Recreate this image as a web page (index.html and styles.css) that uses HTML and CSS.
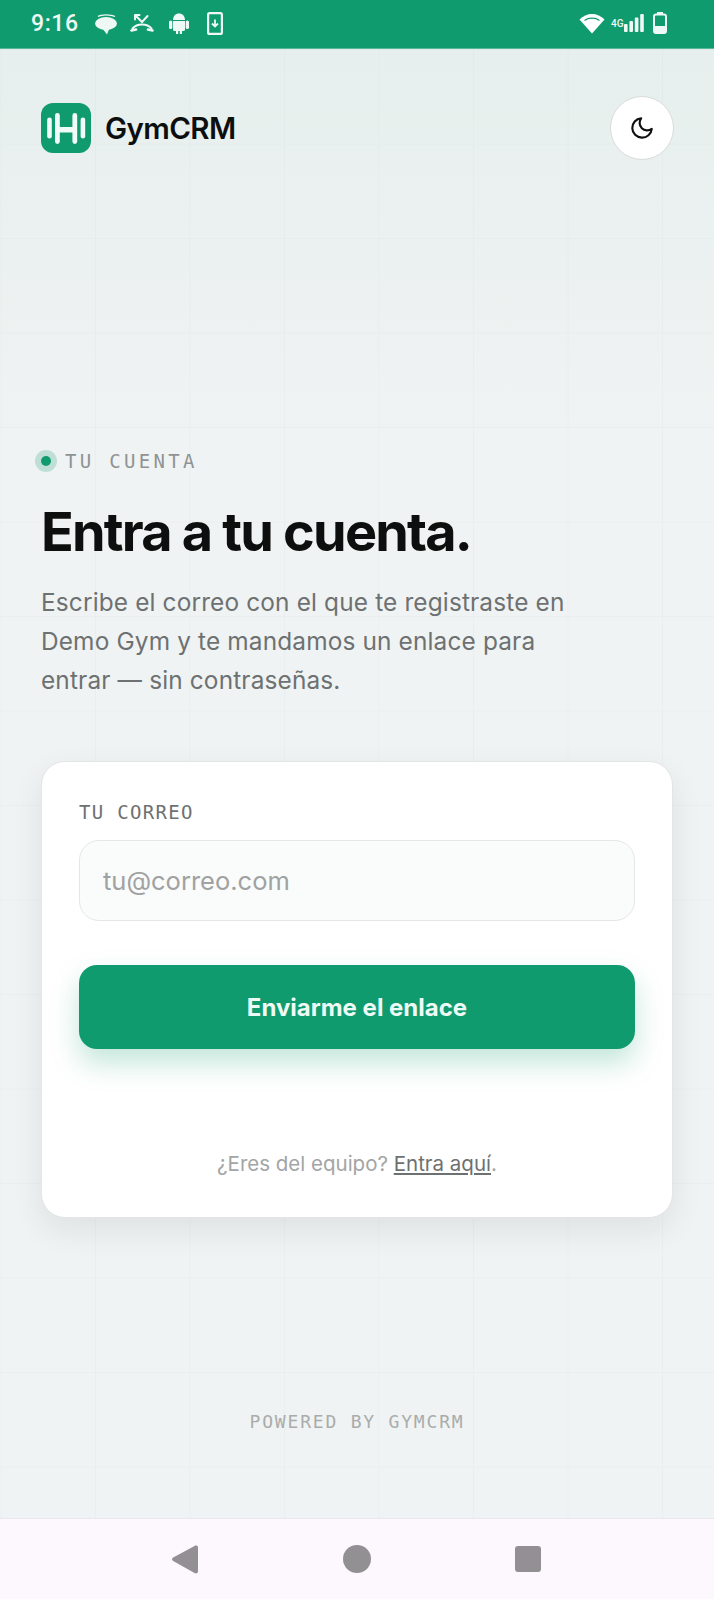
FILE: index.html
```html
<!DOCTYPE html>
<html lang="es">
<head>
    <meta charset="utf-8">
    <title>GymCRM</title>
    <link rel="stylesheet" href="styles.css">
</head>
<body>
    <header class="status-bar">
        <span class="status-time">9:16</span>
        <svg class="status-icon icon-chat" width="22" height="21" viewBox="0 0 22 21" fill="#eef8f4">
            <path d="M3 2.500C6 .2 16 .2 20 2.500" fill="none" stroke="#eef8f4" stroke-width="1.300"/>
            <ellipse cx="11" cy="9.500" rx="11" ry="6.500"/>
            <path d="M7 14l5 6.500 2.500-6.500z"/>
        </svg>
        <svg class="status-icon icon-call" width="24" height="20" viewBox="0 0 24 20" fill="none" stroke="#eef8f4" stroke-width="2" stroke-linecap="round">
            <path d="M2.500 15.500C5 12.500 8.500 11.500 12 11.500s7 1 9.500 4"/>
            <path d="M1.500 17.500l4.500-1M22.500 17.500l-4.500-1" stroke-width="2.600"/>
            <path d="M5 2l7 7 5.500-6M5 2v4.500M5 2h4.500"/>
        </svg>
        <svg class="status-icon icon-android" width="20" height="22" viewBox="0 0 20 22" fill="#eef8f4">
            <path d="M4 8c0-3.800 2.500-6.500 6-6.500s6 2.700 6 6.500z"/>
            <path d="M4 9h12v8.500a1.500 1.500 0 0 1-1.500 1.500H13v3h-2.200v-3H9.200v3H7v-3H5.500A1.500 1.500 0 0 1 4 17.500z"/>
            <rect x="0" y="8.500" width="3.300" height="8.500" rx="1.600"/>
            <rect x="16.700" y="8.500" width="3.300" height="8.500" rx="1.600"/>
        </svg>
        <svg class="status-icon icon-phone" width="16" height="23" viewBox="0 0 16 23" fill="none" stroke="#eef8f4">
            <rect x="1.100" y="1.100" width="13.800" height="20.800" rx="1.500" stroke-width="2.200"/>
            <path d="M8 7.500v7M5 11.500l3 3 3-3" stroke-width="1.800"/>
        </svg>
        <span class="status-spacer"></span>
        <svg class="status-wifi" width="26" height="21" viewBox="0 0 26 21" fill="#fff">
            <path d="M13 20.500L.5 6.500C4 3 8.300 1 13 1s9 2 12.500 5.500z"/>
            <path d="M5.500 7.500C7.500 6 10 5.200 13 5.200s5.500.8 7.500 2.300" stroke="#109b6e" stroke-width="1.200" fill="none"/>
        </svg>
        <span class="status-net">4G</span>
        <svg class="status-bars" width="20" height="18" viewBox="0 0 20 18" fill="#eef8f4">
            <rect x="0" y="10" width="3.600" height="8" rx="1"/>
            <rect x="5.400" y="7" width="3.600" height="11" rx="1"/>
            <rect x="10.800" y="3.500" width="3.600" height="14.500" rx="1"/>
            <rect x="16.200" y="0" width="3.600" height="18" rx="1"/>
        </svg>
        <svg class="status-battery" width="14" height="22" viewBox="0 0 14 22" fill="none">
            <rect x="4" y="0" width="6" height="3" fill="#eef8f4"/>
            <rect x="1" y="2.500" width="12" height="18.500" rx="2" stroke="#eef8f4" stroke-width="2"/>
            <rect x="1" y="14" width="12" height="7" rx="1.500" fill="#eef8f4"/>
        </svg>
    </header>

    <main class="page">
        <div class="top-row">
            <div class="brand">
                <span class="brand-logo">
                    <svg width="50" height="50" viewBox="0 0 50 50" fill="#f1fbf7">
                        <rect x="6.200" y="14.500" width="4.600" height="21" rx="2.300"/>
                        <rect x="14" y="10" width="4.800" height="31" rx="2.400"/>
                        <rect x="31.400" y="10" width="4.800" height="31" rx="2.400"/>
                        <rect x="39.600" y="14.500" width="4.600" height="21" rx="2.300"/>
                        <rect x="17" y="24" width="16" height="5.500"/>
                    </svg>
                </span>
                <span class="brand-name">GymCRM</span>
            </div>
            <button class="theme-toggle" aria-label="Tema">
                <svg width="26" height="26" viewBox="0 0 24 24" fill="none" stroke="#111" stroke-width="2" stroke-linecap="round" stroke-linejoin="round">
                    <path d="M21 12.800A9 9 0 1 1 11.200 3a7 7 0 0 0 9.800 9.800z"/>
                </svg>
            </button>
        </div>

        <section class="intro">
            <div class="eyebrow"><span class="eyebrow-dot"></span>TU CUENTA</div>
            <h1>Entra a tu cuenta.</h1>
            <p class="lead">Escribe el correo con el que te registraste en Demo Gym y te mandamos un enlace para entrar — sin contraseñas.</p>
        </section>

        <section class="card">
            <label class="field-label" for="email">TU CORREO</label>
            <input class="field-input" type="email" id="email" placeholder="tu@correo.com">
            <button class="submit">Enviarme el enlace</button>
            <p class="staff-note">¿Eres del equipo? <a href="#">Entra aquí</a>.</p>
        </section>

        <footer class="powered">POWERED BY GYMCRM</footer>
    </main>

    <nav class="nav-bar">
        <svg width="26" height="29" viewBox="0 0 26 29" fill="#939094">
            <path d="M22.500 1c1.400-.9 3.500-.3 3.500 1.500v24c0 1.800-2.100 2.400-3.500 1.500L1.200 16c-1.600-.9-1.600-2.500 0-3.500z"/>
        </svg>
        <svg width="28" height="28" viewBox="0 0 28 28" fill="#939094">
            <circle cx="14" cy="14" r="14"/>
        </svg>
        <svg class="nav-recent" width="26" height="26" viewBox="0 0 26 26" fill="#939094">
            <rect width="26" height="26" rx="3"/>
        </svg>
    </nav>
</body>
</html>
```

FILE: styles.css
```css
* {
    box-sizing: border-box;
}

html, body {
    margin: 0;
    height: 100%;
}

body {
    display: flex;
    flex-direction: column;
    height: 1599px;
    overflow: hidden;
    font-family: "Inter", "Noto Sans", sans-serif;
    color: #0d0f0e;
    background: #f0f3f3;
}

/* status bar */
.status-bar {
    display: flex;
    align-items: center;
    flex: none;
    height: 49px;
    padding: 0 47px 2px 31px;
    background: #109b6e;
    border-bottom: 1px solid #55b897;
    color: #eef8f4;
}
.status-time {
    width: 64px;
    font-family: "Roboto", sans-serif;
    font-size: 23px;
    font-weight: 500;
    letter-spacing: .6px;
}
.icon-chat {
    margin: 2px 13px 0 0;
}
.icon-call {
    margin: 0 15px 0 0;
}
.icon-android {
    margin: 0 18px 0 0;
}
.status-spacer {
    flex: 1;
}
.status-wifi {
    margin-right: 6px;
}
.status-net {
    font-family: "Roboto", sans-serif;
    font-size: 10px;
    font-weight: 500;
    width: 13px;
}
.status-bars {
    margin-right: 9px;
}

/* page */
.page {
    flex: 1;
    display: flex;
    flex-direction: column;
    padding: 48px 41px 0;
    min-height: 0;
    background-color: #f0f3f3;
    background-image:
        linear-gradient(rgba(16, 155, 110, .045), rgba(16, 155, 110, 0) 400px),
        linear-gradient(#ebeeee 1px, transparent 1px),
        linear-gradient(90deg, #ebeeee 1px, transparent 1px);
    background-size: 100% 100%, 94.500px 94.500px, 94.500px 94.500px;
    background-position: 0 0, 0 0, .500px 0;
}

.top-row {
    display: flex;
    align-items: center;
    justify-content: space-between;
    height: 62px;
}
.brand {
    display: flex;
    align-items: center;
    gap: 14px;
}
.brand-logo {
    display: block;
    width: 50px;
    height: 50px;
    border-radius: 12px;
    background: #109b6e;
}
.brand-logo svg {
    display: block;
}
.brand-name {
    font-size: 29.500px;
    font-weight: 600;
    letter-spacing: -.6px;
}
.theme-toggle {
    display: flex;
    align-items: center;
    justify-content: center;
    width: 64px;
    height: 64px;
    margin-right: -1px;
    padding: 0;
    border: 1px solid #d9dcdc;
    border-radius: 50%;
    background: #fff;
}

.intro {
    margin-top: 290px;
}
.eyebrow {
    display: flex;
    align-items: center;
    height: 24px;
    font-family: "DejaVu Sans Mono", monospace;
    font-size: 19px;
    letter-spacing: 3.300px;
    color: #8f9393;
}
.eyebrow-dot {
    width: 10px;
    height: 10px;
    margin-right: 14px;
    border-radius: 50%;
    background: #109b6e;
    box-shadow: 0 0 0 6px rgba(16, 155, 110, .22);
}
h1 {
    margin: 27px 0 0;
    font-size: 54px;
    line-height: 64px;
    font-weight: 700;
    letter-spacing: -1.800px;
}
.lead {
    max-width: 540px;
    margin: 19px 0 0;
    font-size: 24.400px;
    line-height: 39px;
    letter-spacing: .15px;
    color: #6d7171;
}

/* card */
.card {
    display: flex;
    flex-direction: column;
    height: 457px;
    margin-top: 61px;
    padding: 40px 37px 0;
    border: 1px solid #e4e6e6;
    border-radius: 24px;
    background: #fff;
    box-shadow: 0 12px 32px rgba(20, 30, 30, .08);
}
.field-label {
    height: 20px;
    line-height: 20px;
    font-family: "DejaVu Sans Mono", monospace;
    font-size: 19px;
    letter-spacing: 1.300px;
    color: #6e7171;
}
.field-input {
    height: 81px;
    margin-top: 18px;
    padding: 0 23px;
    border: 1px solid #e5e7e7;
    border-radius: 20px;
    background: #fafbfb;
    font-family: inherit;
    font-size: 25.500px;
    color: #111;
}
.field-input::placeholder {
    color: #a0a2a2;
}
.submit {
    height: 84px;
    margin-top: 44px;
    border: 0;
    border-radius: 18px;
    background: #109b6e;
    box-shadow: 0 14px 28px rgba(16, 155, 110, .25);
    font-family: inherit;
    font-size: 24px;
    font-weight: 700;
    color: #eefaf5;
}
.staff-note {
    margin: 101px 0 0;
    text-align: center;
    font-size: 20.500px;
    line-height: 28px;
    color: #a3a5a5;
}
.staff-note a {
    color: #6e7171;
}

.powered {
    margin-top: 193px;
    text-align: center;
    font-family: "DejaVu Sans Mono", monospace;
    font-size: 18px;
    letter-spacing: 1.800px;
    color: #a9acac;
}

/* navigation bar */
.nav-bar {
    display: flex;
    align-items: center;
    justify-content: center;
    gap: 145px;
    flex: none;
    height: 81px;
    padding-right: 1px;
    border-top: 1px solid #e9e7ec;
    background: #fdf8fe;
}
.nav-recent {
    margin-left: -1px;
}
```
